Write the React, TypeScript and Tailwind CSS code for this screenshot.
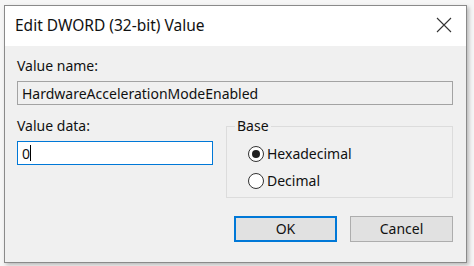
import React from 'react';

const font = { fontFamily: '"Noto Sans", "Open Sans", Arial, sans-serif' };

const Radio: React.FC<{ checked?: boolean; label: string }> = ({ checked, label }) => (
  <div className="flex items-center h-[20px]">
    <span className="w-[16px] h-[16px] rounded-full border border-[#333] bg-white flex items-center justify-center">
      {checked && <span className="w-[8px] h-[8px] rounded-full bg-[#222]" />}
    </span>
    <span className="ml-[3px] text-[14px] text-[#111] leading-none">{label}</span>
  </div>
);

export default function App() {
  return (
    <div className="w-[474px] h-[266px] bg-[#f6f6f6] pl-[4px] pt-[5px]" style={font}>
      <div className="w-[463px] h-[258px] border border-[#8a8a8a] bg-[#f0f0f0] flex flex-col shadow-[2px_2px_4px_rgba(0,0,0,0.25)]">
        <div className="h-[40px] bg-white flex items-center justify-between pl-[10px] pr-[14px]">
          <span className="text-[15.5px] text-[#111]">Edit DWORD (32-bit) Value</span>
          <svg width="16" height="16" viewBox="0 0 16 16" className="text-[#333] -mt-[2px]">
            <path d="M1 1 L15 15 M15 1 L1 15" stroke="currentColor" strokeWidth="1.1" fill="none" />
          </svg>
        </div>
        <div className="flex-1 px-[12px] pt-[10px] flex flex-col">
          <div className="text-[14px] text-[#111] leading-[20px]">Value name:</div>
          <div className="mt-[5px] h-[24px] border border-[#a3a3a3] bg-[#f0f0f0] w-[436px] flex items-center pl-[4px] text-[14px] text-[#111]">
            HardwareAccelerationModeEnabled
          </div>
          <div className="flex mt-[11px]">
            <div className="w-[196px]">
              <div className="text-[14px] text-[#111] leading-[20px]">Value data:</div>
              <div className="mt-[5px] h-[24px] border border-[#0078d7] bg-white flex items-center pl-[4px] text-[14px] text-[#111]">
                0<span className="w-px h-[16px] bg-black" />
              </div>
            </div>
            <div className="ml-[13px] relative mt-[10px] w-[227px] h-[72px] border border-[#dcdcdc]">
              <span className="absolute left-[8px] top-[-11px] bg-[#f0f0f0] px-[2px] text-[14px] text-[#111] leading-[20px]">Base</span>
              <div className="pl-[21px] pt-[17px] flex flex-col gap-[7px]">
                <Radio checked label="Hexadecimal" />
                <Radio label="Decimal" />
              </div>
            </div>
          </div>
          <div className="flex justify-end gap-[13px] mt-[18px] pr-[1px]">
            <button className="w-[103px] h-[26px] border-2 border-[#0078d7] bg-[#e1e1e1] text-[14px] text-[#111] leading-none">OK</button>
            <button className="w-[103px] h-[26px] border border-[#adadad] bg-[#e1e1e1] text-[14px] text-[#111] leading-none">Cancel</button>
          </div>
        </div>
      </div>
    </div>
  );
}
